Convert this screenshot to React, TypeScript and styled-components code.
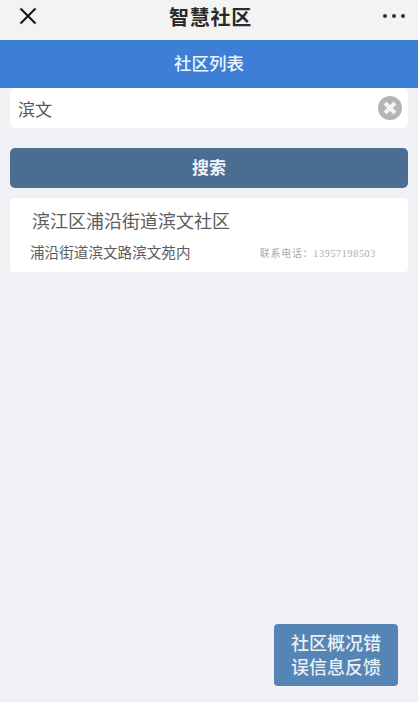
import React from 'react';
import styled, { createGlobalStyle } from 'styled-components';

const GlobalStyle = createGlobalStyle`
    html, body {
        margin: 0;
        padding: 0;
        background-color: #f0f0f5;
    }
    * {
        box-sizing: border-box;
    }
`;

const communities = [
    {
        name: '滨江区浦沿街道滨文社区',
        address: '浦沿街道滨文路滨文苑内',
        phone: '联系电话：13957198503',
    },
];

export default function App() {
    return (
        <Page>
            <GlobalStyle />
            <TopBar>
                <IconSlot>
                    <svg width="20" height="20" viewBox="0 0 20 20">
                        <path d="M2.5 2.5 L17.5 17.5 M17.5 2.5 L2.5 17.5" stroke="#1c1c1c" strokeWidth="2.2" fill="none" />
                    </svg>
                </IconSlot>
                <AppTitle>智慧社区</AppTitle>
                <Dots>
                    <i />
                    <i />
                    <i />
                </Dots>
            </TopBar>
            <Header>社区列表</Header>
            <Content>
                <SearchBox>
                    <SearchText>滨文</SearchText>
                    <svg width="26" height="26" viewBox="0 0 26 26">
                        <circle cx="13" cy="13" r="12" fill="#b4b4b4" />
                        <path d="M8 8 L18 18 M18 8 L8 18" stroke="#f4f4f4" strokeWidth="4" fill="none" />
                    </svg>
                </SearchBox>
                <SearchButton>搜索</SearchButton>
                {communities.map((c) => (
                    <Card key={c.name}>
                        <CardTitle>{c.name}</CardTitle>
                        <CardRow>
                            <Address>{c.address}</Address>
                            <Phone>{c.phone}</Phone>
                        </CardRow>
                    </Card>
                ))}
            </Content>
            <FeedbackRow>
                <FeedbackButton>社区概况错误信息反馈</FeedbackButton>
            </FeedbackRow>
        </Page>
    );
}

const cjk = `"Noto Sans CJK SC", "Liberation Sans", sans-serif`;

const Page = styled.div`
    display: flex;
    flex-direction: column;
    width: 418px;
    height: 702px;
    overflow: hidden;
    background-color: #f0f0f5;
    font-family: ${cjk};
`;

const TopBar = styled.div`
    display: flex;
    align-items: center;
    justify-content: space-between;
    height: 40px;
    padding: 0 13px 8px 18px;
    background-color: #f3f3f3;
`;

const IconSlot = styled.div`
    display: flex;
    width: 20px;
    height: 20px;
`;

const AppTitle = styled.div`
    font-size: 20px;
    font-weight: 700;
    color: #2a2a2a;
    letter-spacing: 0.8px;
`;

const Dots = styled.div`
    display: flex;
    gap: 5px;

    i {
        width: 4px;
        height: 4px;
        border-radius: 50%;
        background-color: #333333;
    }
`;

const Header = styled.div`
    height: 48px;
    line-height: 45px;
    text-align: center;
    font-size: 17.5px;
    font-weight: 500;
    color: #eef5fc;
    background-color: #3d7fd6;
`;

const Content = styled.div`
    display: flex;
    flex-direction: column;
    flex: 1;
    padding: 0 10px;
`;

const SearchBox = styled.div`
    display: flex;
    align-items: center;
    justify-content: space-between;
    height: 40px;
    padding: 0 5px 0 8px;
    background-color: #ffffff;
    border-radius: 5px;
`;

const SearchText = styled.span`
    font-size: 17px;
    color: #555555;
`;

const SearchButton = styled.div`
    height: 40px;
    margin: 20px 0 10px;
    line-height: 37px;
    text-align: center;
    font-size: 17px;
    font-weight: 700;
    color: #eef3f7;
    background-color: #4b6d92;
    border-radius: 5px;
`;

const Card = styled.div`
    display: flex;
    flex-direction: column;
    height: 74px;
    padding: 9px 20px 0;
    background-color: #ffffff;
    border-radius: 4px;
`;

const CardTitle = styled.div`
    padding-left: 2px;
    font-size: 18px;
    line-height: 26px;
    color: #5c5c5c;
`;

const CardRow = styled.div`
    display: flex;
    align-items: center;
    justify-content: space-between;
    margin-top: 8px;
    padding-right: 12px;
`;

const Address = styled.div`
    font-size: 14.6px;
    line-height: 22px;
    color: #5c5c5c;
`;

const Phone = styled.div`
    font-family: "Liberation Serif", "Noto Sans CJK SC", serif;
    font-size: 10px;
    color: #ababab;
    letter-spacing: 0.7px;
`;

const FeedbackRow = styled.div`
    display: flex;
    justify-content: flex-end;
    padding: 0 20px 16px 0;
`;

const FeedbackButton = styled.div`
    width: 124px;
    height: 62px;
    padding: 6px 16px;
    font-size: 18px;
    line-height: 24px;
    font-weight: 500;
    text-align: center;
    color: #e9eff5;
    background-color: #5585b5;
    border-radius: 4px;
`;
